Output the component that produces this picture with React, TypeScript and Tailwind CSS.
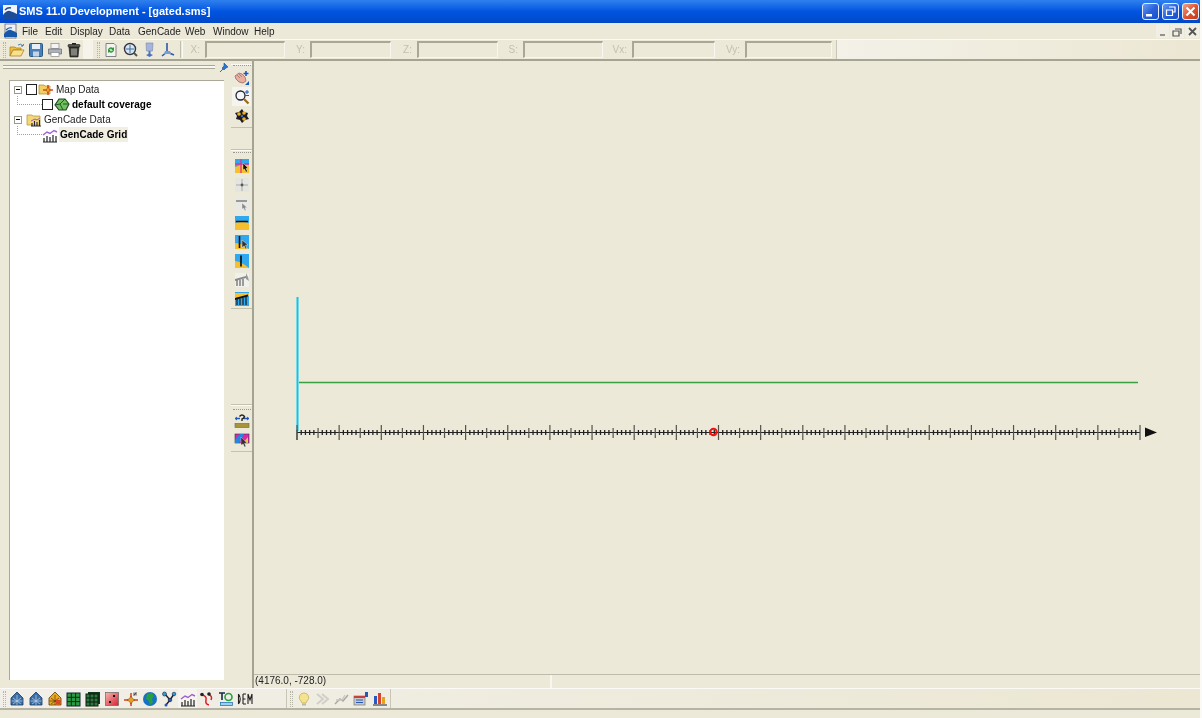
import type { ReactNode } from 'react';

const UI_FONT = "font-['Liberation_Sans',Arial,sans-serif]";

function Ic({ children, size = 16 }: { children: ReactNode; size?: number }) {
  return (
    <svg width={size} height={size} viewBox="0 0 16 16" className="block">
      {children}
    </svg>
  );
}

const icons: Record<string, ReactNode> = {
  open: (
    <Ic>
      <path d="M1 5h5l1 1h5v2H4L1 14z" fill="#f0c040" stroke="#a07818" strokeWidth=".7" />
      <path d="M1 14l3-6h11l-3 6z" fill="#fbe08a" stroke="#a07818" strokeWidth=".7" />
      <path d="M9 3q3-2 5 1M14 4l.5-2M14 4l-2 0" fill="none" stroke="#3a6ea5" strokeWidth=".9" />
    </Ic>
  ),
  save: (
    <Ic>
      <rect x="1.5" y="1.5" width="13" height="13" rx="1" fill="#4a7fb8" stroke="#2c5785" />
      <rect x="4" y="2" width="8" height="5" fill="#e8eef5" />
      <rect x="5" y="9.5" width="6" height="5" fill="#c4d4e4" />
    </Ic>
  ),
  print: (
    <Ic>
      <rect x="4" y="1.5" width="8" height="5" fill="#f4f4f4" stroke="#888" strokeWidth=".7" />
      <path d="M1.5 7h13v5h-13z" fill="#aab2bc" stroke="#667" strokeWidth=".7" />
      <rect x="4" y="10.5" width="8" height="4" fill="#fff" stroke="#888" strokeWidth=".7" />
    </Ic>
  ),
  trash: (
    <Ic>
      <path d="M3 5h10l-1 10H4z" fill="#3a3a34" stroke="#111" strokeWidth=".6" />
      <rect x="2" y="2.5" width="12" height="2.5" rx="1" fill="#5c5c54" stroke="#111" strokeWidth=".6" />
      <path d="M6 6.5v7M8 6.5v7M10 6.5v7" stroke="#d8d8cc" strokeWidth=".9" />
      <rect x="6" y="1" width="4" height="1.6" fill="#222" />
    </Ic>
  ),
  refresh: (
    <Ic>
      <path d="M3 1.5h8l2 2v11H3z" fill="#f4f4ec" stroke="#667" strokeWidth=".8" />
      <path d="M5 8a3 3 0 0 1 5-2l1-1v3.2H8l1-1a2 2 0 0 0-3 1z" fill="#2a9a3a" />
      <path d="M11 8a3 3 0 0 1-5 2l-1 1V7.800h3l-1 1a2 2 0 0 0 3-1z" fill="#2a9a3a" />
    </Ic>
  ),
  zoomFit: (
    <Ic>
      <circle cx="8" cy="7" r="5.500" fill="#d8e6f0" stroke="#334" strokeWidth="1.400" />
      <path d="M8 3v8M4 7h8" stroke="#3a6ea5" strokeWidth="1" />
      <path d="M12 11l3 3" stroke="#554" strokeWidth="2" />
    </Ic>
  ),
  monitor: (
    <Ic>
      <path d="M5 1h7l-.5 8H5.500z" fill="#a4b4dc" stroke="#7a88a8" strokeWidth=".6" />
      <path d="M8.500 9v3" stroke="#5078b8" strokeWidth="2" />
      <path d="M5 13l3.500 2 3.500-2-3.500-1.500z" fill="#4a70c0" />
    </Ic>
  ),
  axes: (
    <Ic>
      <path d="M7 1v9M7 10l-5 4M7 10l7 3" stroke="#2a5aa8" strokeWidth="1.600" fill="none" />
      <path d="M5 9h5l1 3H4z" fill="#7a9ad8" />
    </Ic>
  ),
  hand: (
    <Ic>
      <path d="M1 6l4-3 3 1 3 3 1 4-3 2-4-1-3-3z" fill="#e8b0a4" stroke="#a06858" strokeWidth=".8" />
      <path d="M3 5l3 3M5 4l3 3" stroke="#a06858" strokeWidth=".7" />
      <path d="M12 1v5M9.500 3.500h5" stroke="#1858c0" strokeWidth="1.600" />
      <path d="M15 11v4h-4z" fill="#1858c0" />
    </Ic>
  ),
  zoom: (
    <Ic>
      <circle cx="6.500" cy="6.500" r="4.500" fill="#f4f8fb" stroke="#223" strokeWidth="1.300" />
      <path d="M10 10l4.500 4.500" stroke="#9a6a1a" strokeWidth="2.200" />
      <path d="M13 1v4M11 3h4M11 6.500h4" stroke="#1858c0" strokeWidth="1" />
    </Ic>
  ),
  rotate: (
    <Ic>
      <path d="M8 1l2 3 4 1-1 3 2 3-4 1-3 3-2-3-4-1 1-3-2-3 4-1z" fill="#1a1a24" />
      <circle cx="5" cy="6" r="1.800" fill="#f0b020" />
      <circle cx="10" cy="5" r="1.800" fill="#f0b020" />
      <circle cx="10" cy="11" r="1.800" fill="#f0b020" />
      <circle cx="8" cy="8" r="1.200" fill="#3070d0" />
    </Ic>
  ),
  cellSelect: (
    <Ic>
      <rect x="1" y="1" width="14" height="14" fill="#30a8f0" />
      <path d="M1 15V9q6-3 14-2v8z" fill="#f4c030" />
      <path d="M1 6h14M7 1v14" stroke="#e8308a" strokeWidth="1.300" />
      <path d="M9 5l5 5-2 .5 1.500 3-1.500.5-1.500-3L9 12z" fill="#111" stroke="#fff" strokeWidth=".4" />
    </Ic>
  ),
  gridPoint: (
    <Ic>
      <rect x="1" y="1" width="14" height="14" fill="#e4e4e0" />
      <path d="M8 2v12M2 8h12" stroke="#a8a8a4" strokeWidth="1" />
      <circle cx="8" cy="8" r="1.400" fill="#555" />
    </Ic>
  ),
  barSelect: (
    <Ic>
      <rect x="1" y="1" width="14" height="14" fill="#e8e8e4" />
      <path d="M2 5h11" stroke="#777" strokeWidth="1.400" />
      <path d="M8 7l5 4.500-2 .3 1 2.500-1.200.5-1-2.500L8 13z" fill="#8a8a8a" stroke="#fff" strokeWidth=".3" />
    </Ic>
  ),
  barH: (
    <Ic>
      <rect x="1" y="1" width="14" height="14" fill="#30a8f0" />
      <path d="M1 15V8q7-2 14 0v7z" fill="#f4c030" />
      <path d="M2 6.500h12" stroke="#111" strokeWidth="1.500" />
    </Ic>
  ),
  barVSelect: (
    <Ic>
      <rect x="1" y="1" width="14" height="14" fill="#30a8f0" />
      <path d="M1 15V9q7 0 14 6z" fill="#f4c030" />
      <path d="M5.500 2v12" stroke="#111" strokeWidth="1.600" />
      <path d="M8 6l6 5-2.500.3 1.300 3-1.300.6-1.300-3L8 13.500z" fill="#333" stroke="#fff" strokeWidth=".4" />
    </Ic>
  ),
  barV: (
    <Ic>
      <rect x="1" y="1" width="14" height="14" fill="#30a8f0" />
      <path d="M1 8q7 1 14 7H1z" fill="#f4c030" />
      <path d="M7 2.500v11" stroke="#111" strokeWidth="1.700" />
    </Ic>
  ),
  transectGray: (
    <Ic>
      <rect x="1" y="1" width="14" height="14" fill="#f0f0ec" />
      <path d="M1 7l11-3v2L1 9z" fill="#8a8a86" />
      <path d="M3 8v6M6 7.500v6.500M9 7v7" stroke="#777" strokeWidth="1.400" />
      <path d="M12 1l2 4 1 4-3-2z" fill="#999" />
    </Ic>
  ),
  transectColor: (
    <Ic>
      <rect x="1" y="1" width="14" height="14" fill="#30a8f0" />
      <path d="M1 2h14v3L1 7z" fill="#f4c030" />
      <path d="M1 7l13-3.500v2L1 9z" fill="#111" />
      <path d="M3 8v6M6 7.500v6.500M9 7v7M12 6v8" stroke="#222" strokeWidth="1.300" />
    </Ic>
  ),
  help: (
    <Ic>
      <path d="M1 5.500h5M10 5.500h5" stroke="#1858c0" strokeWidth="1.400" />
      <path d="M1 5.500l2-2v4zM15 5.500l-2-2v4z" fill="#1858c0" />
      <path d="M5.500 3.500q2.500-3 5 0Q10 5.500 8 6v2" fill="none" stroke="#222" strokeWidth="1.400" />
      <rect x="1" y="10.500" width="14" height="4" fill="#a89438" stroke="#665" strokeWidth=".6" />
    </Ic>
  ),
  colorSelect: (
    <Ic>
      <rect x="1" y="2" width="14" height="9" fill="#d828a8" stroke="#334" strokeWidth=".6" />
      <path d="M1 8l5-6h4L5 11H1z" fill="#2088e0" />
      <path d="M9 11l5-6v6z" fill="#f0c828" />
      <path d="M7 5l6 6-2.500.3 1.300 3-1.300.6-1.300-3L7 13z" fill="#333" stroke="#fff" strokeWidth=".3" />
    </Ic>
  ),
  scatter: (
    <Ic>
      <path d="M8 1l6 6v7H2V7z" fill="#3a6ea8" stroke="#1c3a60" strokeWidth=".8" />
      <path d="M4 7l8 6M12 7l-8 6M8 4v10M2.500 10h11" stroke="#c0d4e8" strokeWidth=".7" />
    </Ic>
  ),
  scatterGold: (
    <Ic>
      <path d="M8 1l6 6v7H2V7z" fill="#e8a820" stroke="#5c3c10" strokeWidth=".8" />
      <path d="M4 7l8 6M12 7l-8 6M8 4v10M2.500 10h11" stroke="#5c3c10" strokeWidth=".7" />
      <rect x="9" y="9" width="4.500" height="4.500" fill="#d84828" />
    </Ic>
  ),
  grid2d: (
    <Ic>
      <rect x="1" y="2" width="13" height="13" fill="#2a9a44" stroke="#123" strokeWidth="1" />
      <path d="M5.300 2v13M9.600 2v13M1 6.300h13M1 10.600h13" stroke="#102818" strokeWidth="1" />
    </Ic>
  ),
  grid3d: (
    <Ic>
      <rect x="3" y="1" width="12" height="12" fill="#123820" />
      <rect x="1" y="3" width="12" height="12" fill="#2a7a3c" stroke="#0c1c10" strokeWidth="1" />
      <path d="M5 3v12M9 3v12M1 7h12M1 11h12" stroke="#0c1c10" strokeWidth="1" />
    </Ic>
  ),
  raster: (
    <Ic>
      <defs>
        <linearGradient id="rg" x1="0" y1="0" x2="1" y2="1">
          <stop offset="0" stopColor="#f4b8b0" />
          <stop offset="1" stopColor="#d82030" />
        </linearGradient>
      </defs>
      <rect x="1.500" y="1.500" width="13" height="13" fill="url(#rg)" stroke="#666" strokeWidth=".7" />
      <rect x="9" y="4" width="2" height="2" fill="#111" />
      <rect x="5" y="10" width="2" height="2" fill="#111" />
    </Ic>
  ),
  compass: (
    <Ic>
      <path d="M1 9h14M8 2v13" stroke="#d84018" strokeWidth="1.500" />
      <path d="M8 5l1.500 2.500L12 9l-2.500 1.500L8 13l-1.500-2.500L4 9l2.500-1.500z" fill="#e8a020" stroke="#803010" strokeWidth=".5" />
      <path d="M11 1.500v3l2-3v3" fill="none" stroke="#222" strokeWidth=".8" />
    </Ic>
  ),
  globe: (
    <Ic>
      <circle cx="8" cy="8" r="7" fill="#1870c8" />
      <path d="M5 3l5-1 2 3-2 3 1 3-3 3-1-4-3-2z" fill="#28a040" />
    </Ic>
  ),
  network: (
    <Ic>
      <path d="M4 3l5 6-4 5M9 9l4-6" fill="none" stroke="#222" strokeWidth="1.400" />
      <circle cx="3.500" cy="3" r="2" fill="#30a0d8" stroke="#124" strokeWidth=".6" />
      <circle cx="13" cy="3" r="1.800" fill="#30a0d8" stroke="#124" strokeWidth=".6" />
      <circle cx="9" cy="9" r="1.800" fill="#2858b0" stroke="#124" strokeWidth=".6" />
      <circle cx="5" cy="14" r="1.500" fill="#2858b0" />
    </Ic>
  ),
  genCade: (
    <Ic>
      <path d="M1 8l4-3 3 1.500 4-3 3 1.500" fill="none" stroke="#a060d0" strokeWidth="1.400" />
      <path d="M2 15v-4M5 15V9M8 15v-5M11 15V8M14 15V9M1 15h14" stroke="#222" strokeWidth="1.200" />
    </Ic>
  ),
  ptm: (
    <Ic>
      <path d="M3 4q5 1 4 5t3 5" fill="none" stroke="#d82028" strokeWidth="1.500" />
      <path d="M9 3q5 2 3 6" fill="none" stroke="#d82028" strokeWidth="1.500" />
      <circle cx="3" cy="3.500" r="1.800" fill="#222" />
      <circle cx="10" cy="3" r="1.800" fill="#222" />
    </Ic>
  ),
  to: (
    <Ic>
      <path d="M1 2h6M4 2v7" stroke="#1a2a4a" strokeWidth="1.600" />
      <circle cx="10.500" cy="6" r="3.500" fill="none" stroke="#28a040" strokeWidth="1.600" />
      <rect x="2.500" y="11.500" width="12" height="3" fill="#9ad0f0" stroke="#2878b8" strokeWidth=".8" />
    </Ic>
  ),
  dem: (
    <Ic>
      <path d="M1.500 3v10M1.500 3q3.500 5 0 10M6 3v10M6 3h3M6 8h2.500M6 13h3M11 3v10M15 3v10M11 3l2 6 2-6" fill="none" stroke="#222" strokeWidth="1.100" />
    </Ic>
  ),
  bulb: (
    <Ic>
      <path d="M8 2a4.500 4.500 0 0 1 3 8l-1 2H6l-1-2a4.500 4.500 0 0 1 3-8z" fill="#f4e490" stroke="#c8b060" strokeWidth=".8" />
      <rect x="6" y="12.500" width="4" height="2" fill="#b8b8a8" />
    </Ic>
  ),
  fade: (
    <Ic>
      <path d="M2 3l6 5-6 5M7 3l6 5-6 5" fill="none" stroke="#d0d0c8" strokeWidth="2" />
    </Ic>
  ),
  fadeGraph: (
    <Ic>
      <path d="M1 13l5-5 3 2 5-6" fill="none" stroke="#a8a8a0" strokeWidth="1.400" />
      <path d="M2 9h6l3-5" fill="none" stroke="#c8c8c0" strokeWidth="1.400" />
    </Ic>
  ),
  chartBox: (
    <Ic>
      <rect x="1" y="5" width="11" height="9" fill="#c8c8c8" stroke="#777" strokeWidth=".7" />
      <rect x="1" y="5" width="11" height="2" fill="#c84040" />
      <path d="M3 9h7M3 11.500h7" stroke="#2858b0" />
      <path d="M12 1h3v5h-3z" fill="#2858b0" />
    </Ic>
  ),
  bars: (
    <Ic>
      <rect x="1" y="13" width="14" height="2" fill="#888" />
      <rect x="2" y="5" width="3" height="8" fill="#2858c0" />
      <rect x="6" y="2" width="3" height="11" fill="#d84030" />
      <rect x="10" y="6" width="3" height="7" fill="#e8a020" />
    </Ic>
  ),
  mapFolder: (
    <Ic>
      <path d="M1 3h5l1 1h5v8H1z" fill="#f4d060" stroke="#b08820" strokeWidth=".7" />
      <path d="M10 3v10M5 8h10" stroke="#d84818" strokeWidth="1.500" />
      <path d="M10 5l2 3-2 3-2-3z" fill="#f0a020" stroke="#a03010" strokeWidth=".5" />
    </Ic>
  ),
  coverage: (
    <Ic>
      <path d="M5 2h6l4 5-3 6H5L1 8z" fill="#70c060" stroke="#1c4820" strokeWidth="1.100" />
      <path d="M1 8l5-1 3 6M6 7l5-5M9 7l6 0" fill="none" stroke="#1c4820" strokeWidth=".9" />
    </Ic>
  ),
  genFolder: (
    <Ic>
      <path d="M1 3h5l1 1h7v9H1z" fill="#f4d878" stroke="#b09030" strokeWidth=".7" />
      <path d="M6 14v-3M8.500 14V9M11 14v-4M13.500 14V8M5 14h10" stroke="#223" strokeWidth="1.100" />
      <path d="M5 9l4-2 2 1 3-2" fill="none" stroke="#9a58d0" strokeWidth="1" />
    </Ic>
  ),
  logo: (
    <Ic>
      <rect x="2" y="1" width="11" height="14" fill="#f0f0f4" stroke="#556" strokeWidth=".7" />
      <path d="M1 11q4-5 7-4 3 1 6 3v4H1z" fill="#1858a8" />
      <path d="M3 7q3-3 6-2" fill="none" stroke="#1858a8" strokeWidth="1.200" />
    </Ic>
  ),
};

function Grip() {
  return <div className="mx-px h-[16px] w-[3px] border-x border-dotted border-[#b5b3a3]" />;
}

function Btn({ name, active }: { name: string; active?: boolean }) {
  return (
    <div
      className={`flex h-[19px] w-[19px] shrink-0 items-center justify-center ${active ? 'bg-[#f5f4ee]' : ''}`}
    >
      {icons[name]}
    </div>
  );
}

function CoordField({ label, labelW, w }: { label: string; labelW: number; w: number }) {
  return (
    <>
      <span className="text-right text-[10px] text-[#c2c0b2]" style={{ width: labelW }}>
        {label}
      </span>
      <div
        className="ml-[5px] h-[17px] border-t-2 border-l-2 border-[#a9a796] border-r-[#f7f6f0] border-b-[#f7f6f0] border-r border-b"
        style={{ width: w }}
      />
    </>
  );
}

function SideGroup({
  names,
  activeName,
  h,
  dotTop,
  dotBottom,
}: {
  names: string[];
  activeName?: string;
  h: number;
  dotTop: number;
  dotBottom: number;
}) {
  return (
    <div
      className="flex shrink-0 flex-col items-center border-y border-t-[#fbfaf5] border-b-[#c3c1b0]"
      style={{ height: h }}
    >
      <div
        className="h-[2px] w-[18px] shrink-0 border-t border-dotted border-[#9c9a8a]"
        style={{ marginTop: dotTop, marginBottom: dotBottom }}
      />
      {names.map((n) => (
        <Btn key={n} name={n} active={n === activeName} />
      ))}
    </div>
  );
}

function TreeRow({
  indent,
  box,
  expander,
  icon,
  label,
  bold,
  selected,
}: {
  indent: number;
  box?: boolean;
  expander?: boolean;
  icon: string;
  label: string;
  bold?: boolean;
  selected?: boolean;
}) {
  return (
    <div className="flex h-[15px] items-center" style={{ paddingLeft: indent }}>
      {expander && (
        <div className="mr-[4px] flex h-[8px] w-[8px] items-center justify-center border border-[#9a9a90] bg-white">
          <div className="h-px w-[4px] bg-black" />
        </div>
      )}
      {!expander && (
        <div className="mb-[8px] h-[9px] w-[25px] shrink-0 border-b border-l border-dotted border-[#a0a0a0]" />
      )}
      {box && <div className="mr-[1px] h-[11px] w-[11px] border border-[#222] bg-white" />}
      <div className="mr-[1px] shrink-0">{icons[icon]}</div>
      <span
        className={`whitespace-nowrap px-[1px] text-[10px] leading-[15px] ${bold ? 'font-bold text-black' : 'text-[#222]'} ${selected ? 'bg-[#f1efe2]' : ''}`}
      >
        {label}
      </span>
    </div>
  );
}

function WinBtn({ kind }: { kind: 'min' | 'max' | 'close' }) {
  const bg =
    kind === 'close'
      ? 'bg-gradient-to-br from-[#f0a088] via-[#e0552f] to-[#c23a1a]'
      : 'bg-gradient-to-br from-[#6c9cf0] via-[#2a62dc] to-[#1c4cc8]';
  return (
    <div className={`flex h-[17px] w-[17px] items-center justify-center rounded-[3px] border border-[#e8eefc] ${bg}`}>
      <svg width="13" height="13" viewBox="0 0 13 13">
        {kind === 'min' && <rect x="2" y="9" width="6" height="2.500" fill="#fff" />}
        {kind === 'max' && (
          <path d="M5 2h6v5H9M2.500 5h6v5.500h-6z" fill="none" stroke="#fff" strokeWidth="1.200" />
        )}
        {kind === 'close' && <path d="M2.500 2.500l8 8M10.500 2.500l-8 8" stroke="#fff" strokeWidth="2" />}
      </svg>
    </div>
  );
}

function Ruler() {
  const x0 = 43;
  const step = 843 / 200;
  const ticks = [];
  for (let i = 0; i <= 200; i++) {
    const x = x0 + i * step;
    if (i % 10 === 0) {
      ticks.push(<path key={i} d={`M${x} 364V379`} stroke="#55534a" strokeWidth="1.200" />);
    } else if (i % 5 === 0) {
      ticks.push(<path key={i} d={`M${x} 367V377`} stroke="#55534a" strokeWidth="1.200" />);
    } else {
      ticks.push(<path key={i} d={`M${x} 369V374`} stroke="#222" strokeWidth="1.300" />);
    }
  }
  return <>{ticks}</>;
}

export default function App() {
  const mid = ['cellSelect', 'gridPoint', 'barSelect', 'barH', 'barVSelect', 'barV', 'transectGray', 'transectColor'];
  const bottomA = [
    'scatter', 'scatter', 'scatterGold', 'grid2d', 'grid3d', 'raster', 'compass', 'globe', 'network',
    'genCade', 'ptm', 'to', 'dem',
  ];
  const bottomB = ['bulb', 'fade', 'fadeGraph', 'chartBox', 'bars'];

  return (
    <div className={`flex h-[718px] w-[1202px] flex-col overflow-hidden bg-[#fbfaf6] pr-[2px] blur-[0.3px] ${UI_FONT}`}>
      {/* title bar */}
      <div className="flex h-[23px] shrink-0 items-center bg-gradient-to-b from-[#2f80ee] via-[#0054e0] to-[#0248c8] pl-[3px] pr-[1px]">
        <div className="mr-[2px] h-[14px] w-[14px] shrink-0">
          <svg width="14" height="14" viewBox="0 0 14 14">
            <rect width="14" height="14" fill="#f4f4f8" />
            <path d="M0 10q4-5 7-4 3 1 7 3v5H0z" fill="#1c4c98" />
            <path d="M2 5q3-3 6-2" fill="none" stroke="#1c4c98" strokeWidth="1.400" />
          </svg>
        </div>
        <span className="text-[11px] font-bold whitespace-nowrap text-white">
          SMS 11.0 Development - [gated.sms]
        </span>
        <div className="ml-auto flex gap-[3px]">
          <WinBtn kind="min" />
          <WinBtn kind="max" />
          <WinBtn kind="close" />
        </div>
      </div>

      {/* menu bar */}
      <div className="relative flex h-[16px] shrink-0 items-center bg-[#ece9d8] pl-[3px] text-[10px] text-[#222]">
        <div className="mr-[3px]">{icons.logo}</div>
        <span className="w-[23px]">File</span>
        <span className="w-[25px]">Edit</span>
        <span className="w-[39px]">Display</span>
        <span className="w-[29px]">Data</span>
        <span className="w-[47px]">GenCade</span>
        <span className="w-[28px]">Web</span>
        <span className="w-[41px]">Window</span>
        <span>Help</span>
        <div className="ml-auto flex h-[16px] items-center gap-[1px] pr-[1px] text-[#444]">
          {(['M3 9h5', 'M3 3h6v5M1 5h6v5H1z', 'M2 2l7 7M9 2l-7 7'] as const).map((d, i) => (
            <div key={d} className={`flex h-[14px] items-center justify-center bg-[#f1efe4] ${i === 0 ? 'w-[13px]' : 'w-[14px]'}`}>
              <svg width="11" height="11" viewBox="0 0 11 11">
                <path d={d} fill="none" stroke="#555" strokeWidth={i === 2 ? 1.8 : 1.2} />
              </svg>
            </div>
          ))}
        </div>
      </div>

      {/* top toolbar */}
      <div className="flex h-[22px] shrink-0 items-center border-t border-b-2 border-t-[#fbfaf6] border-b-[#a5a392] bg-[#ece9d8] pl-[2px]">
        <Grip />
        <div className="flex">
          <Btn name="open" />
          <Btn name="save" />
          <Btn name="print" />
          <Btn name="trash" />
        </div>
        <div className="h-[19px] w-[10px] bg-[#f5f3ea]" />
        <div className="ml-[3px]"><Grip /></div>
        <div className="flex">
          <Btn name="refresh" />
          <Btn name="zoomFit" />
          <Btn name="monitor" />
          <Btn name="axes" />
        </div>
        <div className="ml-[3px] h-[17px] w-[3px] border-x border-l-[#c0beac] border-r-[#fbfaf6]" />
        <CoordField label="X:" labelW={17} w={80} />
        <CoordField label="Y:" labelW={20} w={81} />
        <CoordField label="Z:" labelW={21} w={81} />
        <CoordField label="S:" labelW={20} w={80} />
        <CoordField label="Vx:" labelW={24} w={83} />
        <CoordField label="Vy:" labelW={25} w={87} />
        <div className="ml-[4px] h-[19px] flex-1 border-l border-[#c8c6b6] bg-gradient-to-r from-[#f3f1e8] to-[#ece7d3]" />
      </div>

      {/* main area */}
      <div className="flex min-h-0 flex-1">
        {/* project explorer */}
        <div className="flex w-[231px] shrink-0 flex-col bg-[#ece9d8] pb-[8px] pl-[9px] pr-[7px]">
          <div className="flex h-[19px] shrink-0 items-start pt-[4px]">
            <div className="-ml-[6px] h-[4px] w-[212px] shrink-0 border-y border-t-[#a9a796] border-b-[#a9a796] bg-[#f7f6f0]" />
            <svg width="11" height="11" viewBox="0 0 11 11" className="-mt-[3px] ml-[3px] shrink-0">
              <path d="M6 1l4 4-2 1-2 2-1-1-3 3 3-3-1-1 2-2z" fill="#2878d0" stroke="#104c98" strokeWidth=".6" />
            </svg>
          </div>
          <div className="flex-1 border-t border-l border-[#aca899] bg-white pt-[1px] pl-[4px]">
            <TreeRow indent={0} expander box icon="mapFolder" label="Map Data" />
            <TreeRow indent={3} box icon="coverage" label="default coverage" bold />
            <TreeRow indent={0} expander icon="genFolder" label="GenCade Data" />
            <TreeRow indent={3} icon="genCade" label="GenCade Grid" bold selected />
          </div>
        </div>

        {/* module toolbar */}
        <div className="flex w-[21px] shrink-0 flex-col bg-[#ece9d8] pt-[3px]">
          <SideGroup names={['hand', 'zoom', 'rotate']} activeName="zoom" h={64} dotTop={0} dotBottom={1} />
          <div className="h-[22px] shrink-0 border-b border-[#c3c1b0]" />
          <SideGroup names={mid} h={159} dotTop={1} dotBottom={2} />
          <div className="h-[96px] shrink-0 border-b border-[#c3c1b0]" />
          <SideGroup names={['help', 'colorSelect']} h={47} dotTop={3} dotBottom={0} />
          <div className="flex-1" />
        </div>
        <div className="w-[2px] shrink-0 bg-[#a5a392]" />

        {/* graphics window */}
        <div className="flex min-w-0 flex-1 flex-col bg-[#ece9d8]">
          <div className="min-h-0 flex-1">
            <svg width="946" height="616" viewBox="0 0 946 616" className="block">
              <path d="M43.500 236V370" stroke="#00c8f8" strokeWidth="2" />
              <path d="M43 379V369" stroke="#444" strokeWidth="1.200" />
              <path d="M45 321.500H884" stroke="#3aa040" strokeWidth="1.400" />
              <path d="M43 371.500H886" stroke="#222" strokeWidth="1.200" />
              <Ruler />
              <path d="M891 366.500L903 371.500L891 376Z" fill="#111" />
              <circle cx="459.500" cy="371" r="3.200" fill="none" stroke="#f01010" strokeWidth="2" />
            </svg>
          </div>
          <div className="flex h-[14px] shrink-0 border-t border-[#bdbbab] text-[10px] leading-[12px] text-[#222]">
            <div className="w-[296px] pl-px">(4176.0, -728.0)</div>
            <div className="flex-1 border-l-2 border-[#f7f6f0]" />
          </div>
        </div>
      </div>

      {/* bottom toolbar */}
      <div className="flex h-[22px] shrink-0 items-center border-t border-b-2 border-t-[#fbfaf6] border-b-[#b5b3a3] bg-gradient-to-r from-[#f1efe8] to-[#ece7d3] pl-[2px]">
        <Grip />
        <div className="flex">
          {bottomA.map((n, i) => (
            <Btn key={i} name={n} active={n === 'genCade'} />
          ))}
        </div>
        <div className="h-[19px] w-[33px] border-r border-[#c8c6b6]" />
        <div className="ml-[2px]"><Grip /></div>
        <div className="flex">
          {bottomB.map((n) => (
            <Btn key={n} name={n} />
          ))}
        </div>
        <div className="ml-[1px] h-[19px] w-px bg-[#c8c6b6]" />
      </div>
      <div className="h-[8px] shrink-0 bg-[#ece9d8]" />
    </div>
  );
}
